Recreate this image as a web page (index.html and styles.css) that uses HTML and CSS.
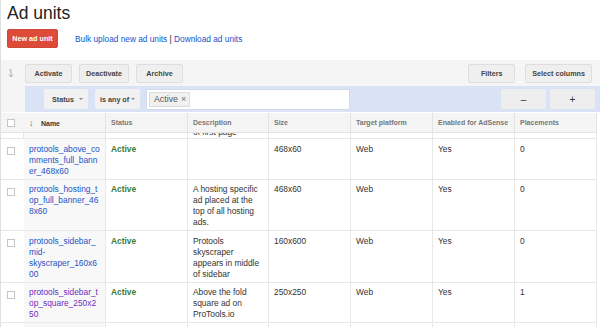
FILE: index.html
```html
<!DOCTYPE html>
<html lang="en">
<head>
    <meta charset="utf-8">
    <title>Ad units</title>
    <link rel="stylesheet" href="styles.css">
</head>
<body>
    <div class="page">
        <!-- Cabecera -->
        <h1 class="title">Ad units</h1>
        <div class="actions">
            <button class="btn-red">New ad unit</button>
            <div class="links"><a href="#">Bulk upload new ad units</a> | <a href="#">Download ad units</a></div>
        </div>

        <!-- Barra de herramientas y filtros -->
        <div class="tools">
            <div class="tools-side">
                <svg width="6" height="9" viewBox="0 0 6 9"><path d="M3 0.5 V8 M1 5.5 L3 8 L5 5.5 M1.5 1 L3 0.5" fill="none" stroke="#aaa" stroke-width="0.9"/></svg>
            </div>
            <div class="tools-main">
                <div class="toolbar">
                    <div class="group">
                        <button class="btn">Activate</button>
                        <button class="btn">Deactivate</button>
                        <button class="btn">Archive</button>
                    </div>
                    <div class="group group-right">
                        <button class="btn">Filters</button>
                        <button class="btn">Select columns</button>
                    </div>
                </div>
                <div class="filterbar">
                    <div class="group">
                        <button class="btn-flat btn-status">Status <span class="caret"></span></button>
                        <button class="btn-flat btn-op">is any of <span class="caret"></span></button>
                        <div class="filter-input">
                            <span class="chip">Active <span class="chip-x">&times;</span></span>
                        </div>
                    </div>
                    <div class="group group-pm">
                        <button class="btn-flat btn-pm">&ndash;</button>
                        <button class="btn-flat btn-pm">+</button>
                    </div>
                </div>
            </div>
        </div>

        <!-- Tabla de bloques de anuncios -->
        <table class="grid">
            <colgroup>
                <col class="c-check">
                <col class="c-name">
                <col class="c-col">
                <col class="c-desc">
                <col class="c-col">
                <col class="c-col">
                <col class="c-col">
                <col class="c-col">
            </colgroup>
            <thead>
                <tr>
                    <th class="check"><span class="box"></span></th>
                    <th class="sorted"><span class="sort-arrow">&darr;</span> Name</th>
                    <th>Status</th>
                    <th>Description</th>
                    <th>Size</th>
                    <th>Target platform</th>
                    <th>Enabled for AdSense</th>
                    <th>Placements</th>
                </tr>
            </thead>
            <tbody>
                <tr class="partial">
                    <td></td>
                    <td class="name"></td>
                    <td></td>
                    <td><div class="clip"><span>of first page</span></div></td>
                    <td></td>
                    <td></td>
                    <td></td>
                    <td></td>
                </tr>
                <tr>
                    <td class="check"><span class="box"></span></td>
                    <td class="name"><a href="#">protools_above_comments_full_banner_468x60</a></td>
                    <td class="status">Active</td>
                    <td></td>
                    <td>468x60</td>
                    <td>Web</td>
                    <td>Yes</td>
                    <td>0</td>
                </tr>
                <tr>
                    <td class="check"><span class="box"></span></td>
                    <td class="name"><a href="#">protools_hosting_top_full_banner_468x60</a></td>
                    <td class="status">Active</td>
                    <td>A hosting specific ad placed at the top of all hosting ads.</td>
                    <td>468x60</td>
                    <td>Web</td>
                    <td>Yes</td>
                    <td>0</td>
                </tr>
                <tr>
                    <td class="check"><span class="box"></span></td>
                    <td class="name"><a href="#">protools_sidebar_mid-skyscraper_160x600</a></td>
                    <td class="status">Active</td>
                    <td>Protools skyscraper appears in middle of sidebar</td>
                    <td>160x600</td>
                    <td>Web</td>
                    <td>Yes</td>
                    <td>0</td>
                </tr>
                <tr>
                    <td class="check"><span class="box"></span></td>
                    <td class="name"><a href="#" class="visited">protools_sidebar_top_square_250x250</a></td>
                    <td class="status">Active</td>
                    <td>Above the fold square ad on ProTools.io</td>
                    <td>250x250</td>
                    <td>Web</td>
                    <td>Yes</td>
                    <td>1</td>
                </tr>
                <tr>
                    <td class="check"><span class="box"></span></td>
                    <td class="name"><a href="#">UW_Sidebar_skyscraper_160x600</a></td>
                    <td class="status">Active</td>
                    <td>This</td>
                    <td>160x600</td>
                    <td>Web</td>
                    <td>Yes</td>
                    <td>0</td>
                </tr>
            </tbody>
        </table>
    </div>
</body>
</html>
```

FILE: styles.css
```css
body {
    margin: 0;
    font-family: "Liberation Sans", Arial, sans-serif;
    color: #222;
    background: #ffffff;
    overflow: hidden;
}

.page {
    border-left: 1px solid #e0e0e0;
    min-height: 327px;
}

.title {
    margin: 0;
    padding: 3px 6px 0;
    height: 21px;
    font-size: 17.5px;
    line-height: 20px;
    font-weight: normal;
    color: #222;
}

.actions {
    display: flex;
    align-items: center;
    margin-top: 5px;
    padding-left: 6px;
    height: 19px;
}

.btn-red {
    width: 51px;
    height: 19px;
    padding: 0;
    border: 1px solid #d14836;
    border-radius: 2px;
    background: #dd4b39;
    color: #ffffff;
    font-family: inherit;
    font-size: 7.2px;
    font-weight: bold;
}

.links {
    margin-left: 17px;
    font-size: 8.3px;
    color: #222;
}

.links a {
    color: #1155cc;
    text-decoration: none;
}

/* Barra de herramientas */
.tools {
    display: flex;
    margin-top: 12px;
    background: #f5f5f5;
}

.tools-side {
    width: 24px;
    flex: none;
    padding: 4px 0 0 7px;
    box-sizing: border-box;
}

.tools-main {
    flex: 1;
}

.toolbar {
    display: flex;
    justify-content: space-between;
    align-items: flex-start;
    height: 26px;
    padding: 4px 8px 0 0;
    box-sizing: border-box;
}

.group {
    display: flex;
    align-items: center;
    gap: 7px;
}

.group-right {
    gap: 10px;
}

.btn {
    min-width: 47px;
    height: 19px;
    padding: 0 6px;
    border: 1px solid #dedede;
    border-radius: 2px;
    background: #efefef;
    color: #444;
    font-family: inherit;
    font-size: 7.2px;
    font-weight: bold;
}

.filterbar {
    display: flex;
    justify-content: space-between;
    align-items: center;
    height: 26px;
    padding: 0 5px 0 19px;
    background: #d9e3f5;
}

.btn-flat {
    display: flex;
    align-items: center;
    height: 20px;
    padding: 0 5px 0 8px;
    border: none;
    border-radius: 2px;
    background: #f1f1f1;
    color: #444;
    font-family: inherit;
    font-size: 7.2px;
    font-weight: bold;
}

.btn-status {
    width: 44px;
    justify-content: space-between;
}

.btn-op {
    width: 45px;
    padding-left: 5px;
    justify-content: space-between;
}

.caret {
    width: 0;
    height: 0;
    border-left: 2px solid transparent;
    border-right: 2px solid transparent;
    border-top: 2px solid #888;
}

.filter-input {
    display: flex;
    align-items: center;
    width: 204px;
    height: 21px;
    padding-left: 2px;
    box-sizing: border-box;
    background: #ffffff;
    border: 1px solid #d3dbea;
    margin-left: -1px;
}

.chip {
    display: flex;
    align-items: center;
    height: 15px;
    padding: 0 3px 0 4px;
    box-sizing: border-box;
    background: #f1f1f1;
    border: 1px solid #dcdcdc;
    color: #555;
    font-size: 8.8px;
}

.chip-x {
    margin-left: 3px;
    color: #777;
    font-size: 9px;
}

.group-pm {
    gap: 4px;
}

.btn-pm {
    width: 45px;
    padding: 0;
    justify-content: center;
    background: #eeeeee;
    color: #333;
    font-size: 10px;
    font-weight: normal;
}

/* Tabla */
.grid {
    width: 596px;
    margin-top: 1px;
    table-layout: fixed;
    border-collapse: separate;
    border-spacing: 0;
    font-size: 8.4px;
    color: #333;
}

.c-check { width: 23px; }
.c-name { width: 82px; }
.c-col { width: 82px; }
.c-desc { width: 81px; }

.grid th {
    height: 19px;
    padding: 0 5px;
    background: #f5f5f5;
    border-bottom: 1px solid #e3e3e3;
    border-right: 1px solid #e3e3e3;
    text-align: left;
    font-size: 7px;
    font-weight: bold;
    color: #777;
    white-space: nowrap;
}

.grid th.sorted {
    color: #333;
}

.sort-arrow {
    display: inline-block;
    width: 10px;
    color: #666;
    font-size: 9px;
    font-weight: normal;
}

.grid td {
    padding: 4.5px 4.5px 2px 5px;
    vertical-align: top;
    line-height: 11px;
    border-bottom: 1px solid #e8e8e8;
    border-right: 1px solid #e8e8e8;
    overflow-wrap: anywhere;
}

.grid th.check,
.grid td.check {
    padding: 0 0 0 6px;
}

.grid td.check {
    padding-top: 8px;
    border-right: none;
}

.grid th.check {
    border-right: none;
}

.box {
    display: block;
    width: 8px;
    height: 8px;
    box-sizing: border-box;
    border: 1px solid #c6c6c6;
    background: #ffffff;
}

.grid td.name {
    background: #f8f8f8;
}

.name a {
    color: #1a55c6;
    text-decoration: none;
}

.name a.visited {
    color: #6b2fbf;
}

.status {
    color: #3a7b3e;
    font-weight: bold;
}

.grid tr.partial td {
    padding: 0;
    height: 5px;
}

.clip {
    height: 5px;
    overflow: hidden;
    display: flex;
    flex-direction: column;
    justify-content: flex-end;
    padding: 0 5px;
}

.clip span {
    display: block;
    flex: none;
    line-height: 11px;
}
```
